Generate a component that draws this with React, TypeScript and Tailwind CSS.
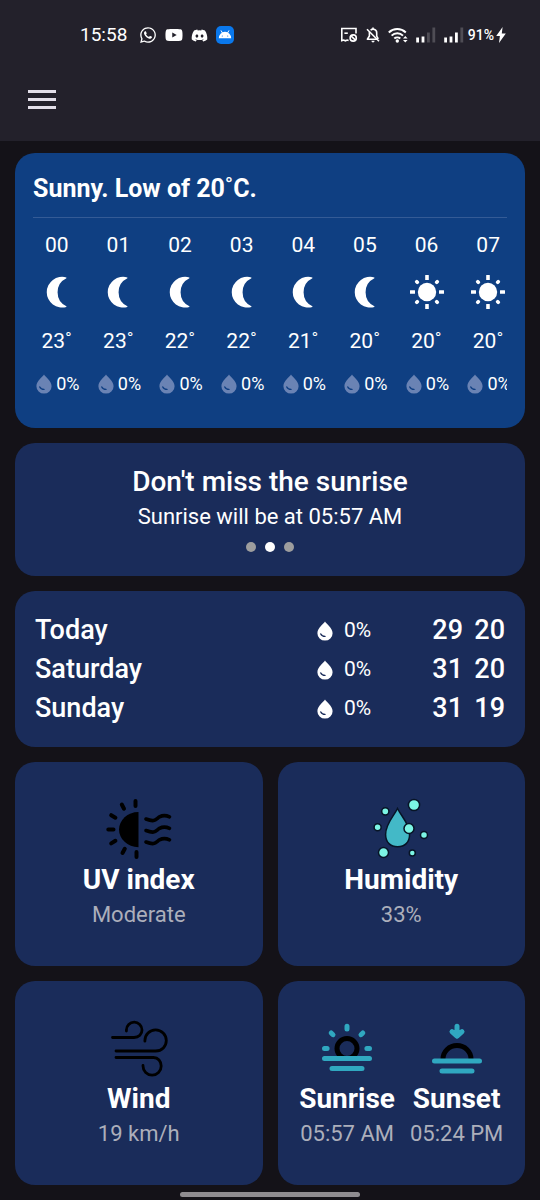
import type { ReactNode } from "react";
import { FaDiscord, FaWhatsapp, FaYoutube } from "react-icons/fa";

type Hour = { hour: string; temp: number; rain: number; sky: "moon" | "sun" };
type Day = { name: string; rain: number; high: number; low: number };

const hours: Hour[] = [
  { hour: "00", temp: 23, rain: 0, sky: "moon" },
  { hour: "01", temp: 23, rain: 0, sky: "moon" },
  { hour: "02", temp: 22, rain: 0, sky: "moon" },
  { hour: "03", temp: 22, rain: 0, sky: "moon" },
  { hour: "04", temp: 21, rain: 0, sky: "moon" },
  { hour: "05", temp: 20, rain: 0, sky: "moon" },
  { hour: "06", temp: 20, rain: 0, sky: "sun" },
  { hour: "07", temp: 20, rain: 0, sky: "sun" },
];

const days: Day[] = [
  { name: "Today", rain: 0, high: 29, low: 20 },
  { name: "Saturday", rain: 0, high: 31, low: 20 },
  { name: "Sunday", rain: 0, high: 31, low: 19 },
];

const rays = [0, 45, 90, 135, 180, 225, 270, 315];

function AndroidIcon() {
  return (
    <svg width="18" height="18" viewBox="0 0 18 18" aria-hidden="true">
      <rect width="18" height="18" rx="5" fill="#0a78ec" />
      <path d="M2.8 12.2a6.2 6.4 0 0 1 12.4 0z" fill="#fff" />
      <path d="M5.2 4.8l1.5 2.6M12.8 4.8l-1.5 2.6" stroke="#fff" strokeWidth="1" strokeLinecap="round" />
      <circle cx="6.3" cy="10" r=".6" fill="#0a78ec" />
      <circle cx="11.7" cy="10" r=".6" fill="#0a78ec" />
    </svg>
  );
}

function CardOffIcon() {
  return (
    <svg width="18" height="16" viewBox="0 0 18 16" fill="none" stroke="#fff" strokeWidth="1.6" aria-hidden="true">
      <path d="M16 6.5V1.5H1.8v12.1l1.8-.6 1.8.8 1.8-.8 1.4.4" />
      <path d="M4.4 6.2h3.4" />
      <circle cx="13.2" cy="11" r="3.1" />
      <path d="M11 8.9l4.4 4.2" />
    </svg>
  );
}

function BellOffIcon() {
  return (
    <svg width="14" height="16" viewBox="0 0 14 16" fill="none" stroke="#fff" strokeWidth="1.6" aria-hidden="true">
      <path d="M4.6 3.2A3.6 3.6 0 0 1 10.7 6v3.2l1.6 2.6M7 .4v2M3.4 4.8V9l-2 3.2h10" strokeLinejoin="round" />
      <path d="M1 2.2l12 12" />
      <path d="M5.4 13.8a1.6 1.8 0 0 0 3.2 0z" fill="#fff" stroke="none" />
    </svg>
  );
}

function WifiIcon() {
  return (
    <svg width="20" height="16" viewBox="0 0 20 16" fill="none" stroke="#fff" strokeWidth="2" aria-hidden="true">
      <path d="M.8 5.4a12.4 12.4 0 0 1 17 0M3.6 8.6a8.2 8.2 0 0 1 11.4 0M6.3 11.6a4.4 4.4 0 0 1 6 0" />
      <circle cx="9.3" cy="14" r="1.7" fill="#fff" stroke="none" />
      <path d="M15 11.6l2.3-2.6 2.3 2.6zM15 13l2.3 2.6 2.3-2.6z" fill="#fff" stroke="none" />
    </svg>
  );
}

function SignalIcon({ level }: { level: number }) {
  return (
    <svg width="20" height="16" viewBox="0 0 20 16" fill="#fff" aria-hidden="true">
      {[5, 6, 10, 15].map((h, i) => (
        <rect key={h} x={0.2 + i * 5.4} y={15.5 - h} width="2.8" height={h} opacity={i < level ? 1 : 0.2} />
      ))}
    </svg>
  );
}

function BoltIcon() {
  return (
    <svg width="10" height="16" viewBox="0 0 10 16" aria-hidden="true">
      <path d="M6.6 0L.2 9h3.7L3 16l6.8-9.6H5.8z" fill="#fff" />
    </svg>
  );
}

function MoonIcon() {
  return (
    <svg width="36" height="36" viewBox="0 0 36 36" aria-hidden="true">
      <path d="M27.4 3.4A15.4 15.4 0 1 0 27.4 33V32.3A15.6 15.6 0 0 1 27.4 4.2z" fill="#fff" />
    </svg>
  );
}

function SunIcon() {
  return (
    <svg width="36" height="36" viewBox="0 0 36 36" fill="#fff" aria-hidden="true">
      <circle cx="18" cy="18" r="9.2" />
      {rays.map((a) => (
        <rect
          key={a}
          x="16.2"
          y={a % 90 === 0 ? 1 : 1.8}
          width="3.6"
          height={a % 90 === 0 ? 5 : 4.2}
          rx={a % 90 === 0 ? 0.3 : 1.4}
          transform={`rotate(${a} 18 18)`}
        />
      ))}
    </svg>
  );
}

function DropIcon({ faded = false }: { faded?: boolean }) {
  return (
    <svg width="16" height="20" viewBox="0 0 16 20" aria-hidden="true">
      <path
        d="M8 .6C9.2 2.6 15.6 7.4 15.6 12.2A7.6 7.4 0 0 1 .4 12.2C.4 7.4 6.8 2.6 8 .6z"
        fill={faded ? "#6a83b4" : "#fff"}
      />
      <path
        d="M3.8 13c.8 1.7 2.2 2.4 4.2 2.4"
        fill="none"
        stroke={faded ? "#0f3f82" : "#1a2c5a"}
        strokeWidth="1.4"
        strokeLinecap="round"
      />
    </svg>
  );
}

function UvIcon() {
  return (
    <svg width="66" height="62" viewBox="0 0 66 62" fill="none" stroke="#000" strokeWidth="4" strokeLinecap="round" aria-hidden="true">
      <path d="M32.5 14v35.2C21.5 49.2 13 41 13 31.6s8.5-17.6 19.5-17.6z" fill="#000" stroke="none" />
      <path d="M29.5 3v5M15.8 6.5l2.2 4.2M5.2 17.2l4.2 2.5M2.3 31.5h5.2M5.2 45.4l4.2-2.6M16.5 55l2.3-4.2M30.5 54v5" />
      <path
        d="M40 21c9 3.5 9.5.5 13.5-2.2 3.5-1.8 6.5-1.6 10 0M40 32.5c9 3.5 9.5.5 13.5-2.2 3.5-1.8 6.5-1.6 10 0M40 44c9 3.5 9.5.5 13.5-2.2 3.5-1.8 6.5-1.6 10 0"
        strokeWidth="3.6"
      />
    </svg>
  );
}

const bubbles = [
  [42, 7, 5.6],
  [13.3, 13.3, 3.6],
  [5.6, 29.3, 3.5],
  [37, 30.5, 5],
  [52, 37, 3.5],
  [11.5, 54.5, 5],
  [40.3, 55, 3],
];

function HumidityIcon() {
  return (
    <svg width="58" height="62" viewBox="0 0 58 62" stroke="#071426" strokeWidth="1.5" aria-hidden="true">
      <path d="M25.5 10.5C29 18 37.6 25.5 37.6 36.5c0 8-5 12.2-12 12.2s-12-4.2-12-12.2C13.6 25.5 22 18 25.5 10.5z" fill="#43b9c7" />
      {bubbles.map(([x, y, r]) => (
        <circle key={`${x}-${y}`} cx={x} cy={y} r={r} fill="#7cf5e4" />
      ))}
    </svg>
  );
}

function WindIcon() {
  return (
    <svg width="58" height="62" viewBox="0 0 58 62" fill="none" stroke="#000" strokeWidth="2.8" strokeLinecap="round" aria-hidden="true">
      <path d="M2.5 20.5h21.5c5 0 8-3.4 8-7.5a7.8 7.8 0 0 0-15.6 0v1" />
      <path d="M6 34h39.5c6.5 0 10.8-4.8 10.8-10.4a10.7 10.7 0 0 0-21.4 0v.6" />
      <path d="M6 40.5h37.5c4.5 0 7.7 3.8 7.7 8.5a9 9 0 0 1-18.2 0v-.5" />
    </svg>
  );
}

function SunriseIcon() {
  return (
    <svg width="50" height="62" viewBox="0 0 50 62" fill="none" strokeLinecap="round" stroke="#30a8c0" strokeWidth="5" aria-hidden="true">
      <circle cx="25" cy="31.5" r="10" stroke="#000" />
      <path d="M25 9.3v2.6M9.2 16l1.8 1.7M40.8 16l-1.8 1.7M2.5 31.5h2.6M44.9 31.5h2.6M2.5 41.5h45M10 51.5h30" />
    </svg>
  );
}

function SunsetIcon() {
  return (
    <svg width="50" height="62" viewBox="0 0 50 62" fill="none" strokeLinecap="round" strokeLinejoin="round" stroke="#30a8c0" strokeWidth="5" aria-hidden="true">
      <path d="M11 42a14 13.5 0 0 1 28 0" stroke="#000" />
      <path d="M25 9.2v9.8M20 14.6l5 4.7 5-4.7M2.5 44h45M10 54h30" />
      <path d="M19 14h12l-6 5z" fill="#30a8c0" strokeWidth="2" />
    </svg>
  );
}

function Card({ children, className = "" }: { children: ReactNode; className?: string }) {
  return <section className={`rounded-[20px] bg-[#1a2c5a] ${className}`}>{children}</section>;
}

function Metric({ icon, title, value }: { icon: ReactNode; title: string; value: string }) {
  return (
    <div className="flex flex-col items-center">
      {icon}
      <h2 className="mt-1 text-[28px] leading-8 font-bold">{title}</h2>
      <p className="text-[22px] leading-[38px] text-[#acafbb]">{value}</p>
    </div>
  );
}

function StatusBar() {
  return (
    <div className="flex items-center justify-between pt-[23px] pr-[34px] pl-20">
      <div className="flex items-center">
        <time className="mr-3 text-[19px] leading-6">15:58</time>
        <div className="flex items-center gap-2">
          <FaWhatsapp size={18} />
          <FaYoutube size={18} />
          <FaDiscord size={17} />
          <AndroidIcon />
        </div>
      </div>
      <div className="flex items-center">
        <div className="mr-1 flex items-center gap-2">
          <CardOffIcon />
          <BellOffIcon />
          <WifiIcon />
          <SignalIcon level={2} />
          <SignalIcon level={3} />
        </div>
        <span className="mr-0.5 text-[14px] leading-6 font-medium">91%</span>
        <BoltIcon />
      </div>
    </div>
  );
}

export default function App() {
  return (
    <div className="flex min-h-screen flex-col bg-[#141218] font-['Roboto',sans-serif] text-white">
      <header className="bg-[#23212b] pb-[22px]">
        <StatusBar />
        <button type="button" aria-label="Open menu" className="mt-8 ml-4 flex h-10 w-[52px] flex-col items-center justify-center gap-[5px]">
          <span className="h-[3px] w-7 bg-[#e3dfe9]" />
          <span className="h-[3px] w-7 bg-[#e3dfe9]" />
          <span className="h-[3px] w-7 bg-[#e3dfe9]" />
        </button>
      </header>

      <main className="flex flex-col gap-[15px] px-[15px] pt-3">
        <section className="rounded-[20px] bg-[#0f3f82] px-[18px] pt-[18px] pb-7">
          <h1 className="border-b border-[#345b96] pb-2.5 text-[25px] leading-9 font-bold">Sunny. Low of 20˚C.</h1>
          <div className="overflow-x-auto overflow-y-hidden [scrollbar-width:none]">
            <ul className="-ml-[7px] grid w-[104%] grid-cols-8 pt-[11px]">
              {hours.map((h) => (
                <li key={h.hour} className="flex flex-col items-center">
                  <span className="text-[21px] leading-8">{h.hour}</span>
                  <span className="mt-[13px]">{h.sky === "moon" ? <MoonIcon /> : <SunIcon />}</span>
                  <span className="mt-[15px] text-[21px] leading-8">{h.temp}˚</span>
                  <span className="mt-[11px] flex items-center gap-1 pl-0.5 text-[18px] leading-8">
                    <DropIcon faded />
                    {h.rain}%
                  </span>
                </li>
              ))}
            </ul>
          </div>
        </section>

        <Card className="flex flex-col items-center pt-[21px] pb-6 text-center">
          <h2 className="text-[28px] leading-9 font-medium">Don't miss the sunrise</h2>
          <p className="text-[22px] leading-[34px]">Sunrise will be at 05:57 AM</p>
          <div className="mt-2 flex gap-[9px]">
            <span className="size-[10px] rounded-full bg-[#9e9e9e]" />
            <span className="size-[10px] rounded-full bg-white" />
            <span className="size-[10px] rounded-full bg-[#9e9e9e]" />
          </div>
        </Card>

        <Card className="px-5 pt-5 pb-[19px]">
          <table className="w-full">
            <tbody>
              {days.map((d) => (
                <tr key={d.name} className="text-[27px] leading-[39px] font-medium">
                  <th scope="row" className="p-0 text-left font-medium">{d.name}</th>
                  <td className="w-[104px] p-0">
                    <span className="flex items-center gap-[11px] text-[21px] leading-[39px] font-normal">
                      <DropIcon />
                      {d.rain}%
                    </span>
                  </td>
                  <td className="w-[42px] p-0 text-right">{d.high}</td>
                  <td className="w-[42px] p-0 text-right">{d.low}</td>
                </tr>
              ))}
            </tbody>
          </table>
        </Card>

        <div className="grid grid-cols-2 gap-[15px]">
          <Card className="pt-9 pb-8">
            <Metric icon={<UvIcon />} title="UV index" value="Moderate" />
          </Card>
          <Card className="pt-9 pb-8">
            <Metric icon={<HumidityIcon />} title="Humidity" value="33%" />
          </Card>
          <Card className="pt-9 pb-8">
            <Metric icon={<WindIcon />} title="Wind" value="19 km/h" />
          </Card>
          <Card className="flex justify-center gap-[15px] pt-9 pb-8">
            <Metric icon={<SunriseIcon />} title="Sunrise" value="05:57 AM" />
            <Metric icon={<SunsetIcon />} title="Sunset" value="05:24 PM" />
          </Card>
        </div>
      </main>

      <div className="flex justify-center pt-[7px] pb-[3px]">
        <div className="h-[5px] w-1/3 rounded-full bg-[#8f8c90]" />
      </div>
    </div>
  );
}
